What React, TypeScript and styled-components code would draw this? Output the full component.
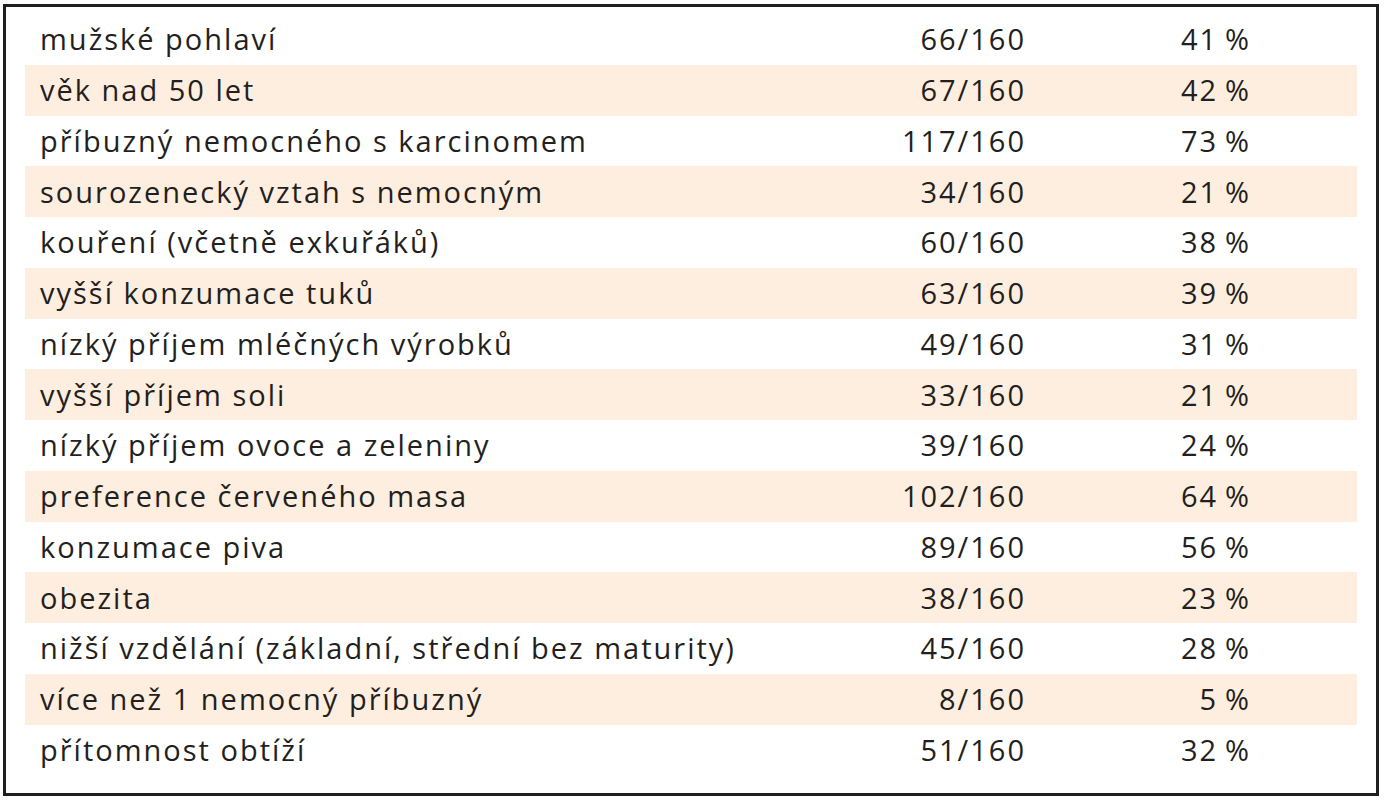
import React from "react";
import styled, { createGlobalStyle } from "styled-components";

const Global = createGlobalStyle`
  html, body { margin: 0; padding: 0; background: #ffffff; }
  body { font-family: "Open Sans", Lato, sans-serif; }
`;

const Page = styled.div`
  width: 1384px;
  height: 800px;
  padding: 4px 5px 4px 3px;
  box-sizing: border-box;
`;

const Frame = styled.div`
  box-sizing: border-box;
  width: 1376px;
  height: 792px;
  border: 3px solid #1f1f1f;
  padding: 7px 19px 0 19px;
  display: flex;
  flex-direction: column;
`;

const Row = styled.div<{ $shaded: boolean }>`
  display: grid;
  grid-template-columns: 1fr 200px 225px;
  height: 50.75px;
  padding: 0 108px 1px 15px;
  box-sizing: border-box;
  background: ${(p) => (p.$shaded ? "#fdeedf" : "transparent")};
  align-items: center;
  font-family: "Open Sans", Lato, sans-serif;
  font-size: 29px;
  letter-spacing: 2px;
  color: #231f20;
  line-height: 1;
`;

const Label = styled.span`
  white-space: nowrap;
`;

const Num = styled.span`
  text-align: right;
  white-space: nowrap;
  margin-right: -2px;
`;

const rows: [string, string, string][] = [
  ["mužské pohlaví", "66/160", "41"],
  ["věk nad 50 let", "67/160", "42"],
  ["příbuzný nemocného s karcinomem", "117/160", "73"],
  ["sourozenecký vztah s nemocným", "34/160", "21"],
  ["kouření (včetně exkuřáků)", "60/160", "38"],
  ["vyšší konzumace tuků", "63/160", "39"],
  ["nízký příjem mléčných výrobků", "49/160", "31"],
  ["vyšší příjem soli", "33/160", "21"],
  ["nízký příjem ovoce a zeleniny", "39/160", "24"],
  ["preference červeného masa", "102/160", "64"],
  ["konzumace piva", "89/160", "56"],
  ["obezita", "38/160", "23"],
  ["nižší vzdělání (základní, střední bez maturity)", "45/160", "28"],
  ["více než 1 nemocný příbuzný", "8/160", "5"],
  ["přítomnost obtíží", "51/160", "32"],
];

export default function App() {
  return (
    <>
      <Global />
      <Page>
        <Frame>
          {rows.map(([label, n, pct], i) => (
            <Row key={i} $shaded={i % 2 === 1}>
              <Label>{label}</Label>
              <Num>{n}</Num>
              <Num>{pct}{"\u2009"}%</Num>
            </Row>
          ))}
        </Frame>
      </Page>
    </>
  );
}
